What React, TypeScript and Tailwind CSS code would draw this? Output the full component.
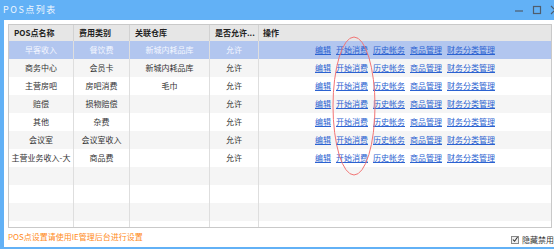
import React from "react";

const rows = [
  { name: "早客收入", type: "餐饮费", store: "新城内耗品库", allow: "允许" },
  { name: "商务中心", type: "会员卡", store: "新城内耗品库", allow: "允许" },
  { name: "主营房吧", type: "房吧消费", store: "毛巾", allow: "允许" },
  { name: "赔偿", type: "损物赔偿", store: "", allow: "允许" },
  { name: "其他", type: "杂费", store: "", allow: "允许" },
  { name: "会议室", type: "会议室收入", store: "", allow: "允许" },
  { name: "主营业务收入-大", type: "商品费", store: "", allow: "允许" },
  null,
  null,
  null,
  null,
];

const links = ["编辑", "开始消费", "历史帐务", "商品管理", "财务分类管理"];

const cols = "grid grid-cols-[65px_56px_80px_49px_1fr]";

export default function App() {
  return (
    <div
      className="relative w-[554px] h-[249px] bg-[#62b1f6] flex flex-col overflow-hidden"
      style={{ fontFamily: '"Noto Sans CJK SC", "Noto Sans", sans-serif' }}
    >
      {/* Title bar */}
      <div className="h-[20px] flex items-center pl-[3px] shrink-0">
        <span className="text-[9px] tracking-[1.5px] text-[#eef6ff]">POS点列表</span>
        <div className="ml-auto flex items-center gap-[8px] mr-[-6px] text-[#4f5d6d]">
          <svg width="10" height="10" viewBox="0 0 10 10">
            <line x1="1" y1="6" x2="9" y2="6" stroke="currentColor" strokeWidth="1.2" />
          </svg>
          <svg width="10" height="10" viewBox="0 0 10 10">
            <rect x="1.5" y="1.5" width="7" height="7" fill="none" stroke="currentColor" strokeWidth="1.2" />
          </svg>
          <svg width="10" height="10" viewBox="0 0 10 10">
            <path d="M1 1 L9 9 M9 1 L1 9" stroke="currentColor" strokeWidth="1.2" />
          </svg>
        </div>
      </div>

      {/* Content */}
      <div className="ml-[4px] h-[227px] bg-white flex flex-col pl-[4px] pr-[2px] pt-[4px] shrink-0">
        <div className="h-[204px] border border-[#c9c9c9] flex flex-col overflow-hidden text-[8px]">
          {/* Header */}
          <div className={`${cols} h-[16px] bg-[#e6e6e6] font-bold text-[#222] shrink-0`}>
            <div className="pl-[5px] flex items-center border-r border-[#d2d2d2]">POS点名称</div>
            <div className="pl-[5px] flex items-center border-r border-[#d2d2d2]">费用类别</div>
            <div className="pl-[5px] flex items-center border-r border-[#d2d2d2]">关联仓库</div>
            <div className="pl-[5px] flex items-center border-r border-[#d2d2d2]">是否允许...</div>
            <div className="pl-[4px] flex items-center">操作</div>
          </div>
          {/* Body */}
          <div className="flex flex-col">
            {rows.map((r, i) => {
              const bg = i === 0 ? "bg-[#b2c6ef]" : i % 2 === 1 ? "bg-[#f5f5f5]" : "bg-white";
              const txt = i === 0 ? "text-[#f4f7ff]" : "text-[#333]";
              return (
                <div key={i} className={`${cols} h-[18px] shrink-0 ${bg} ${txt}`}>
                  <div className="flex items-center justify-center border-r border-[#dedede] whitespace-nowrap">
                    {r?.name}
                  </div>
                  <div className="flex items-center justify-center border-r border-[#dedede] whitespace-nowrap">
                    {r?.type}
                  </div>
                  <div className="flex items-center justify-center border-r border-[#dedede] whitespace-nowrap">
                    {r?.store}
                  </div>
                  <div className="flex items-center justify-center border-r border-[#dedede]">{r?.allow}</div>
                  <div className="flex items-center justify-center gap-[5px]">
                    {r &&
                      links.map((l) => (
                        <a key={l} className="text-[#2b62d1] underline underline-offset-[1px] cursor-pointer">
                          {l}
                        </a>
                      ))}
                  </div>
                </div>
              );
            })}
          </div>
        </div>

        {/* Footer */}
        <div className="flex-1 flex items-center">
          <span className="text-[8px] text-[#ff8a22] mt-[-2px]">POS点设置请使用IE管理后台进行设置</span>
          <label className="ml-auto flex items-center gap-[3px] text-[8px] text-[#333] mt-[4px] mr-[-2px]">
            <span className="w-[8px] h-[8px] border border-[#8a8a8a] bg-[#f0f0f0] flex items-center justify-center">
              <svg width="7" height="7" viewBox="0 0 7 7">
                <path d="M1 3.5 L3 5.5 L6.5 0.5" fill="none" stroke="#333" strokeWidth="1.2" />
              </svg>
            </span>
            隐藏禁用
          </label>
        </div>
      </div>

      {/* Red annotation ellipse */}
      <svg className="absolute left-0 top-0 pointer-events-none" width="554" height="249">
        <ellipse cx="354" cy="106" rx="21" ry="69" fill="none" stroke="#f27575" strokeWidth="1" />
      </svg>
    </div>
  );
}
